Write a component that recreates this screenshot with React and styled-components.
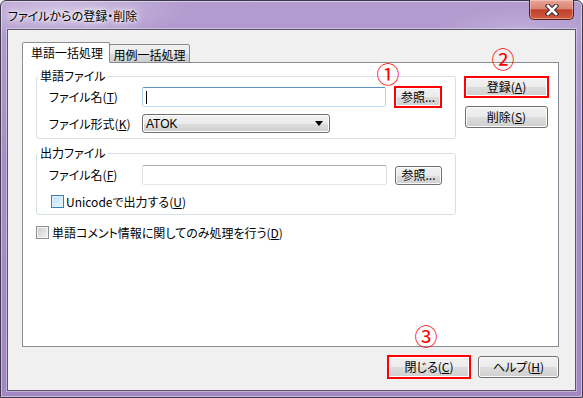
import React from 'react';
import styled, { createGlobalStyle, css } from 'styled-components';

const Global = createGlobalStyle`
  html, body { margin: 0; padding: 0; background: #fff; }
  body {
    font-family: "Noto Sans CJK JP", "Noto Sans", sans-serif;
    font-size: 12px;
    color: #000;
    font-feature-settings: "palt";
  }
  * { box-sizing: border-box; }
`;

const Window = styled.div`
  width: 583px;
  height: 398px;
  display: flex;
  flex-direction: column;
  border: 1px solid #3f3a4a;
  border-radius: 6px 6px 0 0;
  padding: 0 6px 6px 6px;
  background:
    radial-gradient(ellipse 180px 40px at 60px 10px, rgba(220, 208, 235, 0.7), rgba(220, 208, 235, 0) 70%),
    radial-gradient(ellipse 120px 30px at 520px 28px, rgba(200, 185, 225, 0.6), rgba(200, 185, 225, 0) 70%),
    linear-gradient(180deg, #b39dd0 0%, #a78dc7 40%, #a287c3 100%);
  box-shadow: inset 0 0 0 1px rgba(255, 255, 255, 0.45);
`;

const TitleBar = styled.div`
  height: 28px;
  display: flex;
  align-items: flex-start;
  justify-content: space-between;
`;

const TitleText = styled.div`
  height: 28px;
  display: flex;
  align-items: center;
  padding-left: 1px;
  font-size: 12px;
  color: #000;
  text-shadow: 0 0 6px #fff, 0 0 10px rgba(255, 255, 255, 0.9), 0 0 3px rgba(255, 255, 255, 0.9);
`;

const CloseBtn = styled.div`
  width: 45px;
  height: 20px;
  margin: -1px 2px 0 0;
  border: 1px solid #5a1e18;
  border-top: none;
  border-radius: 0 0 5px 5px;
  background: linear-gradient(180deg, #e7a597 0%, #d98674 45%, #c0412b 52%, #cf5b40 100%);
  box-shadow: inset 0 0 0 1px rgba(255, 220, 210, 0.45);
  display: flex;
  align-items: center;
  justify-content: center;
`;

const Client = styled.div`
  flex: 1;
  display: flex;
  flex-direction: column;
  border: 1px solid #5d5668;
  box-shadow: 0 0 0 1px rgba(255, 255, 255, 0.35);
  background: #f0f0f0;
  padding: 12px 16px 12px 14px;
`;

const TabStrip = styled.div`
  display: flex;
  align-items: flex-end;
  height: 21px;
  margin-bottom: -1px;
  position: relative;
  z-index: 1;
`;

const Tab = styled.div`
  display: flex;
  align-items: center;
  justify-content: center;
  border: 1px solid #898c95;
  border-radius: 2px 2px 0 0;
  ${(p) =>
    p.active
      ? css`
          width: 88px;
          height: 21px;
          background: #fff;
          border-bottom: 1px solid #fff;
          padding: 0 0 1px 2px;
          position: relative;
          z-index: 2;
        `
      : css`
          width: 81px;
          height: 19px;
          margin-left: -1px;
          background: linear-gradient(180deg, #f2f2f2 0%, #ebebeb 50%, #dddddd 51%, #cfcfcf 100%);
          padding-top: 1px;
        `}
`;

const Panel = styled.div`
  height: 285px;
  display: flex;
  gap: 9px;
  border: 1px solid #898c95;
  background: #fff;
  padding: 13px 11px 0 13px;
`;

const LeftCol = styled.div`
  width: 420px;
  display: flex;
  flex-direction: column;
`;

const RightCol = styled.div`
  width: 82px;
  display: flex;
  flex-direction: column;
  gap: 8px;
`;

const Group = styled.section`
  border: 1px solid #d5dfe5;
  border-radius: 3px;
  padding: 0 13px 5px 12px;
  margin-top: ${(p) => p.mt || 0}px;
  display: flex;
  flex-direction: column;
`;

const Caption = styled.div`
  width: fit-content;
  margin: -8px 0 0 -11px;
  padding: 0 2px;
  line-height: 14px;
  background: #fff;
`;

const Row = styled.div`
  display: flex;
  align-items: center;
  margin-top: ${(p) => p.mt || 0}px;
`;

const Label = styled.div`
  width: 93px;
  line-height: 14px;
`;

const TextBox = styled.div`
  width: 245px;
  height: 20px;
  border: 1px solid;
  border-color: ${(p) => (p.focused ? '#5b95c2 #b5d3ea #c5dff0 #b5d3ea' : '#abadb3 #dbdfe6 #e3e9ef #dbdfe6')};
  border-radius: 2px;
  background: #fff;
  display: flex;
  align-items: center;
  padding-left: 3px;
`;

const Caret = styled.span`
  width: 1px;
  height: 13px;
  background: #000;
`;

const Combo = styled.div`
  width: 188px;
  height: 19px;
  border: 1px solid #707070;
  border-radius: 3px;
  background: linear-gradient(180deg, #f2f2f2 0%, #ebebeb 50%, #dddddd 51%, #cfcfcf 100%);
  box-shadow: inset 0 0 0 1px #fcfcfc;
  display: flex;
  align-items: center;
  justify-content: space-between;
  padding: 0 6px 0 3px;
  font-family: "Liberation Sans", "Noto Sans", sans-serif;
  font-size: 12px;
`;

const Button = styled.button`
  font-family: inherit;
  font-size: 12px;
  font-feature-settings: "palt";
  width: ${(p) => p.w}px;
  height: ${(p) => p.h || 22}px;
  margin: 0 0 0 ${(p) => p.ml || 0}px;
  padding: 0;
  color: #000;
  line-height: 1;
  border: 1px solid #707070;
  border-radius: 3px;
  background: linear-gradient(180deg, #f2f2f2 0%, #ebebeb 50%, #dddddd 51%, #cfcfcf 100%);
  box-shadow: inset 0 0 0 1px #fcfcfc;
  display: flex;
  align-items: center;
  justify-content: center;
  flex: none;
  ${(p) =>
    p.marked &&
    css`
      border: 2px solid #f00;
      border-radius: 0;
      box-shadow: inset 0 0 0 1px #fff;
    `}
`;

const Marked = styled.div`
  position: relative;
  display: flex;
  margin: ${(p) => p.m || '0'};
`;

const Annotation = styled.span`
  position: absolute;
  width: 24px;
  height: 24px;
  line-height: 24px;
  text-align: center;
  color: #f00;
  font-size: 23px;
  font-family: "Noto Sans CJK JP", sans-serif;
  pointer-events: none;
`;

const CheckRow = styled.div`
  display: flex;
  align-items: center;
  height: 16px;
  gap: ${(p) => p.gap || 2}px;
  margin: ${(p) => p.mt || 0}px 0 0 ${(p) => p.ml || 0}px;
`;

const Box = styled.span`
  width: 13px;
  height: 13px;
  flex: none;
  border: 1px solid ${(p) => (p.hot ? '#3c7fb1' : '#8e8f8f')};
  background: ${(p) =>
    p.hot
      ? 'linear-gradient(135deg, #b9dff6 0%, #d8eefb 60%, #eaf6fd 100%)'
      : 'linear-gradient(135deg, #cbcbcb 0%, #e4e4e4 60%, #f6f6f6 100%)'};
  box-shadow: inset 0 0 0 1px ${(p) => (p.hot ? '#def1fc' : '#f4f4f4')};
`;

const BottomRow = styled.div`
  display: flex;
  justify-content: flex-end;
  align-items: center;
  gap: 7px;
  height: 22px;
  margin-top: 9px;
`;

const Mn = ({ children }) => <u>{children}</u>;

export default function App() {
  return (
    <>
      <Global />
      <Window>
        <TitleBar>
          <TitleText>ファイルからの登録・削除</TitleText>
          <CloseBtn>
            <svg width="14" height="12" viewBox="0 0 14 12">
              <path d="M3 2 L11 10 M11 2 L3 10" stroke="#3a2a2a" strokeWidth="4.6" strokeLinecap="square" />
              <path d="M3 2 L11 10 M11 2 L3 10" stroke="#fff" strokeWidth="2.6" strokeLinecap="square" />
            </svg>
          </CloseBtn>
        </TitleBar>
        <Client>
          <TabStrip>
            <Tab active>単語一括処理</Tab>
            <Tab>用例一括処理</Tab>
          </TabStrip>
          <Panel>
            <LeftCol>
              <Group>
                <Caption>単語ファイル</Caption>
                <Row mt={4}>
                  <Label>
                    ファイル名(<Mn>T</Mn>)
                  </Label>
                  <TextBox focused>
                    <Caret />
                  </TextBox>
                  <Marked m="-1px 0">
                    <Annotation style={{ left: -10, top: -25 }}>①</Annotation>
                    <Button w={48} h={22} ml={8} marked>
                      参照...
                    </Button>
                  </Marked>
                </Row>
                <Row mt={7}>
                  <Label>
                    ファイル形式(<Mn>K</Mn>)
                  </Label>
                  <Combo>
                    <span>ATOK</span>
                    <svg width="8" height="5" viewBox="0 0 8 5">
                      <polygon points="0,0 8,0 4,5" fill="#000" />
                    </svg>
                  </Combo>
                </Row>
              </Group>
              <Group mt={14}>
                <Caption>出力ファイル</Caption>
                <Row mt={5}>
                  <Label>
                    ファイル名(<Mn>F</Mn>)
                  </Label>
                  <TextBox />
                  <Button w={47} h={19} ml={8}>
                    参照...
                  </Button>
                </Row>
                <CheckRow mt={8} ml={2} gap={2}>
                  <Box hot />
                  <span>
                    Unicodeで出力する(<Mn>U</Mn>)
                  </span>
                </CheckRow>
              </Group>
              <CheckRow mt={9} gap={3}>
                <Box />
                <span>
                  単語コメント情報に関してのみ処理を行う(<Mn>D</Mn>)
                </span>
              </CheckRow>
            </LeftCol>
            <RightCol>
              <Marked m="0 0 0 -1px">
                <Annotation style={{ left: 27, top: -30 }}>②</Annotation>
                <Button w={85} marked>
                  登録(<Mn>A</Mn>)
                </Button>
              </Marked>
              <Button w={83}>
                削除(<Mn>S</Mn>)
              </Button>
            </RightCol>
          </Panel>
          <BottomRow>
            <Marked>
              <Annotation style={{ left: 27, top: -32 }}>③</Annotation>
              <Button w={84} h={24} marked>
                閉じる(<Mn>C</Mn>)
              </Button>
            </Marked>
            <Button w={81}>
              ヘルプ(<Mn>H</Mn>)
            </Button>
          </BottomRow>
        </Client>
      </Window>
    </>
  );
}
